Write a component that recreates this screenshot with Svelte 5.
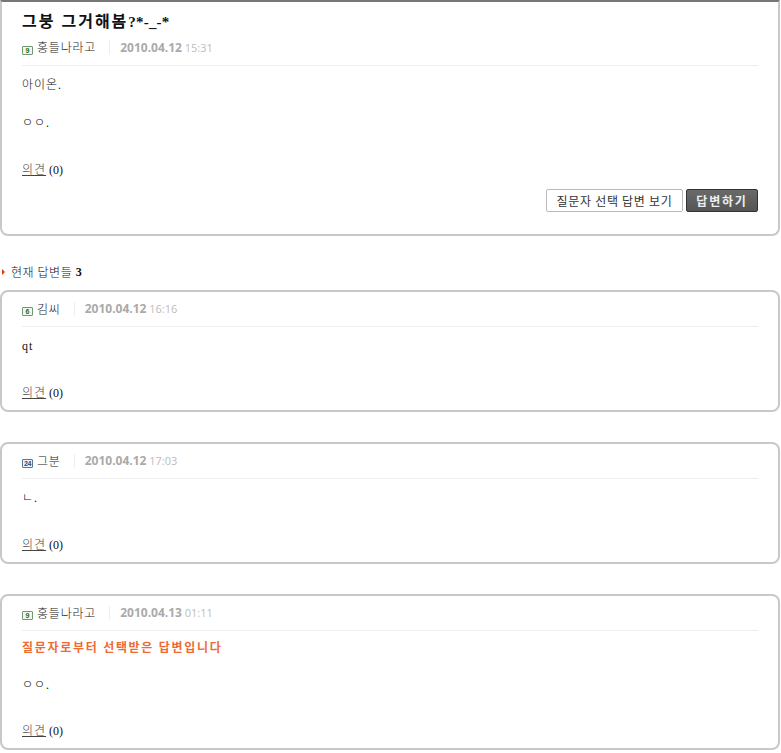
<script lang="ts">
  interface Post {
    level: string
    levelKind: string
    author: string
    date: string
    time: string
    picked?: boolean
    body: string[]
  }

  const question: Post = {
    level: "9",
    levelKind: "green",
    author: "홍들나라고",
    date: "2010.04.12",
    time: "15:31",
    body: ["아이온.", "ㅇㅇ."]
  }

  const answers: Post[] = [
    { level: "6", levelKind: "green", author: "김씨", date: "2010.04.12", time: "16:16", body: ["qt"] },
    { level: "24", levelKind: "blue", author: "그분", date: "2010.04.12", time: "17:03", body: ["ㄴ."] },
    { level: "9", levelKind: "green", author: "홍들나라고", date: "2010.04.13", time: "01:11", picked: true, body: ["ㅇㅇ."] }
  ]
</script>

{#snippet meta(post: Post)}
  <div class="meta">
    <span class="who">
      <span class="badge {post.levelKind}">{post.level}</span>
      <span class="author">{post.author}</span>
    </span>
    <span class="when"><b>{post.date}</b> {post.time}</span>
  </div>
{/snippet}

{#snippet opinion()}
  <p class="opinion"><a href="#opinion">의견</a> (0)</p>
{/snippet}

<div class="page">
  <section class="box question">
    <h1>그붕 그거해봄<span class="tail">?*-_-*</span></h1>
    {@render meta(question)}
    <div class="body">
      {#each question.body as line}
        <p>{line}</p>
      {/each}
    </div>
    {@render opinion()}
    <div class="actions">
      <button type="button" class="btn-light">질문자 선택 답변 보기</button>
      <button type="button" class="btn-dark">답변하기</button>
    </div>
  </section>

  <h2 class="count"><span class="arrow"></span>현재 답변들 <b>3</b></h2>

  <div class="answers">
    {#each answers as post}
      <section class="box" class:has-pick={post.picked}>
        {@render meta(post)}
        <div class="body">
          {#if post.picked}
            <p class="picked">질문자로부터 선택받은 답변입니다</p>
          {/if}
          {#each post.body as line}
            <p>{line}</p>
          {/each}
        </div>
        {@render opinion()}
      </section>
    {/each}
  </div>
</div>

<style>
  :global(body) {
    margin: 0;
    background: #fff;
    font-family: "Liberation Serif", "Noto Sans CJK KR", serif;
    font-size: 12px;
    font-weight: 300;
    color: #111;
  }

  .page {
    width: 780px;
  }

  .box {
    box-sizing: border-box;
    border: 2px solid #c8c8c8;
    border-radius: 8px;
    padding: 0 20px 0;
    height: 122px;
    display: flex;
    flex-direction: column;
  }

  .question {
    height: 236px;
    border-top-color: #777;
    border-radius: 0 0 8px 8px;
  }

  h1 {
    margin: 10px 0 0;
    font-size: 16px;
    line-height: 20px;
    font-weight: 700;
    letter-spacing: 2px;
    color: #111;
  }

  .tail {
    font-size: 15px;
    letter-spacing: 0.2px;
  }

  .meta {
    display: flex;
    align-items: center;
    box-sizing: border-box;
    height: 35px;
    padding-bottom: 1px;
    border-bottom: 1px solid #eee;
    flex: none;
  }

  .question .meta {
    height: 34px;
    padding-bottom: 3px;
  }

  .who {
    display: flex;
    align-items: center;
    gap: 4px;
    height: 14px;
    padding-right: 13px;
    border-right: 1px solid #eee;
    margin-right: 10px;
  }

  .badge {
    box-sizing: border-box;
    width: 11px;
    height: 9px;
    margin-top: 6px;
    border: 1px solid #6f9a6f;
    border-radius: 1px;
    background: #f2f7ee;
    font: 700 7px/7px "Liberation Sans", sans-serif;
    text-align: center;
    color: #1f6a1f;
  }

  .badge.blue {
    border-color: #56779c;
    background: #eef3f8;
    color: #1c4a80;
    letter-spacing: -0.5px;
  }

  .author {
    font-size: 12px;
    letter-spacing: 0.8px;
    color: #222;
  }

  .when {
    font-family: "Open Sans", sans-serif;
    font-size: 11px;
    font-weight: 400;
    color: #bdbdbd;
  }

  .when b {
    font-size: 12px;
    font-weight: 700;
    color: #aaa;
  }

  .body {
    flex: 1;
    padding-top: 10px;
  }

  .has-pick .body {
    padding-top: 8px;
  }

  .body p {
    margin: 0 0 20px;
    line-height: 18px;
    font-size: 12px;
    letter-spacing: 1px;
  }

  .body p.picked {
    margin-bottom: 19px;
    font-weight: 700;
    color: #ef6a32;
    letter-spacing: 1.7px;
  }

  .opinion {
    margin: 0 0 8px;
    line-height: 18px;
    font-size: 12px;
  }

  .question .opinion {
    margin-bottom: 10px;
  }

  .opinion a {
    color: #444;
    letter-spacing: 1px;
    text-decoration: underline;
  }

  .actions {
    display: flex;
    justify-content: flex-end;
    gap: 3px;
    margin-bottom: 22px;
  }

  .actions button {
    box-sizing: border-box;
    height: 23px;
    padding: 0;
    border-radius: 2px;
    font-family: "Noto Sans CJK KR", sans-serif;
    font-size: 12px;
    line-height: 1;
  }

  .btn-light {
    width: 137px;
    background: #fff;
    border: 1px solid #bbb;
    color: #333;
    font-weight: 400;
    letter-spacing: 0.7px;
  }

  .btn-dark {
    width: 72px;
    background: linear-gradient(#6a6a6a, #555);
    border: 1px solid #333;
    color: #eee;
    font-weight: 700;
    letter-spacing: 1.8px;
  }

  .count {
    display: flex;
    align-items: center;
    height: 18px;
    margin: 27px 0 9px;
    font-size: 12px;
    font-weight: 300;
    letter-spacing: 0.5px;
    color: #111;
    white-space: pre;
  }

  .count b {
    font-weight: 700;
    color: #111;
  }

  .arrow {
    width: 0;
    height: 0;
    margin: 0 6px 0 2px;
    border-left: 3px solid #d43c0c;
    border-top: 3px solid transparent;
    border-bottom: 3px solid transparent;
  }

  .answers {
    display: flex;
    flex-direction: column;
    gap: 30px;
  }

  .answers .box:last-child {
    height: 156px;
  }
</style>
